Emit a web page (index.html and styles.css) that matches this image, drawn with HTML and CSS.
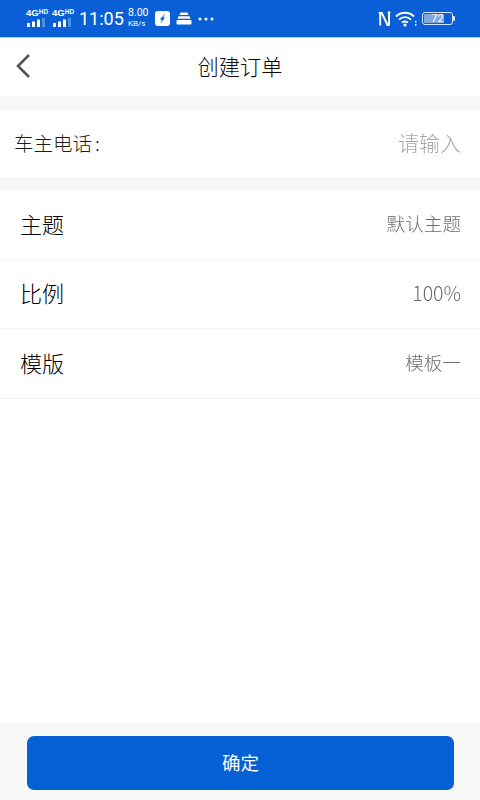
FILE: index.html
```html
<!DOCTYPE html>
<html lang="zh-CN">
<head>
<meta charset="utf-8">
<title>创建订单</title>
<link rel="stylesheet" href="styles.css">
</head>
<body>
<div class="page">
  <div class="status">
    <div class="net">
      <div class="sim"><span class="sim-t">4G<sup>HD</sup></span><svg width="21" height="9" viewBox="0 0 21 9"><g fill="#fff"><rect x="1" y="5" width="3" height="4"/><rect x="6" y="3.5" width="3" height="5.5"/><rect x="11" y="1.5" width="3" height="7.5"/></g><rect x="16" y="0" width="3" height="9" fill="#4d8fe0"/></svg></div>
      <div class="sim"><span class="sim-t">4G<sup>HD</sup></span><svg width="21" height="9" viewBox="0 0 21 9"><g fill="#fff"><rect x="1" y="5" width="3" height="4"/><rect x="6" y="3.5" width="3" height="5.5"/><rect x="11" y="1.5" width="3" height="7.5"/></g><rect x="16" y="0" width="3" height="9" fill="#4d8fe0"/></svg></div>
      <span class="time">11:05</span>
      <div class="speed"><span class="speed-n">8.00</span><span class="speed-u">KB/s</span></div>
      <svg class="ic-bolt" width="15" height="15" viewBox="0 0 15 15"><rect width="15" height="15" rx="3" fill="#fff"/><path d="M10 2.5 L4.8 8.4 H7 L5.2 12.6 L10.3 6.6 H8 Z" fill="#0a5fd6"/></svg>
      <svg class="ic-stack" width="16" height="13" viewBox="0 0 16 13"><g fill="#fff"><path d="M4.5 0.5 H11.5 L12.5 3 H3.5 Z"/><path d="M2.5 4.2 H13.5 L14.5 6.8 H1.5 Z"/><rect x="0.5" y="8" width="15" height="4.6" rx="1"/></g></svg>
      <svg class="ic-dots" width="16" height="4" viewBox="0 0 16 4"><g fill="#fff"><circle cx="2" cy="2" r="1.5"/><circle cx="8" cy="2" r="1.5"/><circle cx="14" cy="2" r="1.5"/></g></svg>
    </div>
    <div class="sys">
      <svg width="13" height="16" viewBox="0 0 13 16"><path d="M2.2 14.5 V2 H0.8 M2.2 2 H3.8 L9.5 14 H11 M11 14.5 V1.5 M9.8 1.5 H12.4" fill="none" stroke="#fff" stroke-width="1.9"/></svg>
      <svg width="22" height="16" viewBox="0 0 22 16"><g fill="none" stroke="#fff" stroke-width="1.9"><path d="M1 5.5 C6 0.5 14 0.5 19 5.5"/><path d="M4 8.7 C7.5 5.2 12.5 5.2 16 8.7"/><path d="M7 11.6 C9 10 11 10 13 11.6"/></g><circle cx="10" cy="14" r="1.6" fill="#fff"/><rect x="20" y="10" width="1.5" height="1.5" fill="#fff"/><rect x="20" y="13" width="1.5" height="1.5" fill="#fff"/></svg>
      <div class="batt"><div class="batt-fill"></div><span class="batt-t">72</span><i class="batt-cap"></i></div>
    </div>
  </div>
  <header class="bar">
    <svg class="back" width="16" height="26" viewBox="0 0 16 26"><path d="M14 2 L3 13 L14 24" fill="none" stroke="#555" stroke-width="2.6"/></svg>
    <h1 class="title">创建订单</h1>
  </header>
  <div class="gap"></div>
  <div class="phone"><span class="phone-l">车主电话<span class="colon">:</span></span><span class="phone-p">请输入</span></div>
  <div class="gap g2"></div>
  <div class="row"><span class="row-l">主题</span><span class="row-v">默认主题</span></div>
  <div class="row"><span class="row-l">比例</span><span class="row-v num">100%</span></div>
  <div class="row"><span class="row-l">模版</span><span class="row-v">模板一</span></div>
  <div class="spacer"></div>
  <footer class="foot"><button class="ok"><span class="ok-t">确定</span></button></footer>
</div>
</body>
</html>
```
FILE: styles.css
```css
* { box-sizing: border-box; }
html, body { margin: 0; padding: 0; }
body { font-family: "Noto Sans CJK SC", "Noto Sans", sans-serif; background: #fff; color: #222; }
.page { width: 480px; height: 800px; display: flex; flex-direction: column; overflow: hidden; }
.status { height: 38px; background: #0a5fd6; border-bottom: 1px solid #a9c8f2; display: flex; justify-content: space-between; align-items: center; padding: 0 25px 0 26px; color: #fff; flex: none; }
.net { display: flex; align-items: center; }
.sim { display: flex; flex-direction: column; width: 26px; margin-top: -3px; }
.sim-t { font: 700 9.5px/10px "Liberation Sans", sans-serif; height: 10px; white-space: nowrap; }
.sim-t sup { font-size: 6.5px; line-height: 0; vertical-align: 2px; }
.time { font: 400 18px/20px Roboto, sans-serif; margin-left: 1px; width: 49px; }
.speed { display: flex; flex-direction: column; align-items: flex-start; width: 27px; margin-top: -2px; }
.speed-n { font: 400 10.5px/12px Roboto, sans-serif; }
.speed-u { font: 400 8px/10px Roboto, sans-serif; }
.ic-stack { margin-left: 6px; }
.ic-dots { margin-left: 6px; }
.sys { display: flex; align-items: center; gap: 4px; }
.batt { position: relative; width: 31px; height: 13px; border: 1px solid #d5e3f7; border-radius: 3px; display: flex; align-items: center; justify-content: center; margin-left: 1px; margin-right: 2px; }
.batt-fill { position: absolute; left: 1px; top: 1px; bottom: 1px; width: 20px; background: #7fa8dc; border-radius: 1px; }
.batt-t { position: relative; font: 400 11px/11px Roboto, sans-serif; }
.batt-cap { position: absolute; right: -3px; top: 3px; width: 2px; height: 5px; background: #d5e3f7; border-radius: 0 1px 1px 0; }
.bar { height: 58px; flex: none; position: relative; display: flex; align-items: center; justify-content: center; background: #fff; padding-bottom: 2px; }
.back { position: absolute; left: 15px; top: 15px; }
.title { margin: 0; font-size: 21.2px; font-weight: 300; color: #0a0a0a; line-height: 1.3; }
.gap { height: 14px; background: #f7f7f7; flex: none; }
.g2 { height: 13px; }
.phone { height: 67px; flex: none; display: flex; justify-content: space-between; align-items: center; padding: 0 19px 2px 14px; }
.phone-l { font-size: 19.5px; font-weight: 300; color: #1c1c1c; line-height: 1.3; }
.colon { margin-left: 3px; }
.phone-p { font-size: 21px; font-weight: 300; color: #a6a6a6; line-height: 1.3; will-change: opacity; }
.row { height: 69.5px; flex: none; display: flex; justify-content: space-between; align-items: center; padding: 0 19px 2px 20px; border-bottom: 1px solid #f3f3f3; }
.row-l { font-size: 22px; font-weight: 300; color: #000; line-height: 1.3; }
.row-v { font-size: 18.6px; font-weight: 300; color: #6c6c6c; line-height: 1.3; will-change: opacity; }
.num { font-size: 19.5px; }
.spacer { flex: 1; }
.foot { height: 77px; flex: none; background: #f8f8f8; padding: 13px 26px 10px 27px; }
.ok { display: block; width: 427px; height: 54px; border: 0; border-radius: 7px; background: #0560d6; color: #fff; font: 400 18.5px "Noto Sans CJK SC", sans-serif; padding: 0 0 2px; }
.ok-t { line-height: 1.3; }
```
